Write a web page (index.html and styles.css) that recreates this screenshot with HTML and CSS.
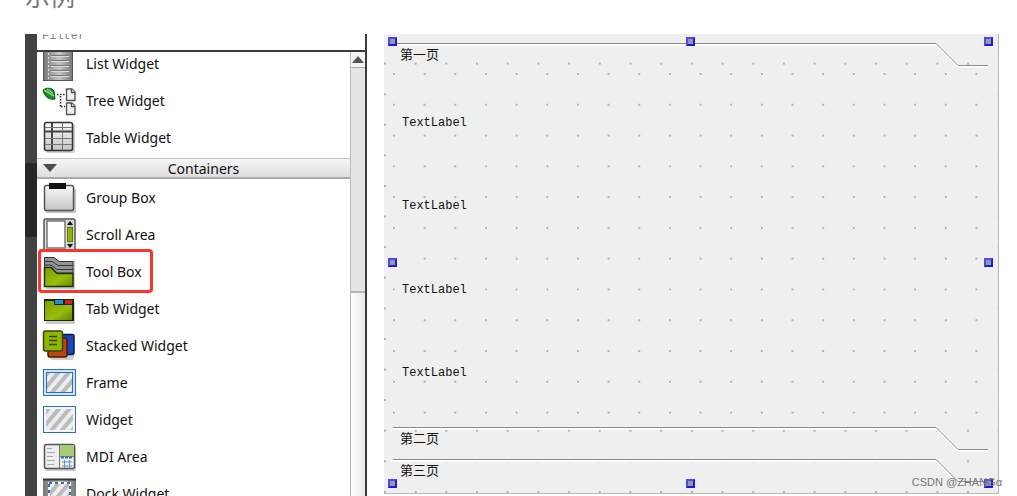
FILE: index.html
```html
<!DOCTYPE html>
<html lang="zh-CN">
<head>
  <meta charset="UTF-8" />
  <title>示例</title>
  <meta name="viewport" content="width=device-width, initial-scale=1.0" />
  <link rel="stylesheet" href="styles.css">
</head>
<body>

  <header class="page-header">
    <h2>示例</h2>
  </header>

  <main class="designer">
    <section class="toolbox">
      <div class="side-strip"><div class="side-active"></div></div>

      <div class="widget-box">
        <input class="filter" type="text" placeholder="Filter" aria-label="Filter" />

        <div class="list-area">
          <div class="widget-list">
            <ul>
              <li>
                <svg class="icon" viewBox="0 0 34 37">
                  <defs>
                    <linearGradient id="gray" x1="0" y1="0" x2="1" y2="0">
                      <stop offset="0" stop-color="#777" /><stop offset="0.55" stop-color="#c4c6c4" /><stop offset="1" stop-color="#777" />
                    </linearGradient>
                    <linearGradient id="silver" x1="0" y1="0" x2="0" y2="1">
                      <stop offset="0" stop-color="#fafafa" /><stop offset="1" stop-color="#c4c4c4" />
                    </linearGradient>
                    <linearGradient id="green" x1="0" y1="0" x2="1" y2="1">
                      <stop offset="0" stop-color="#7c9f00" /><stop offset="0.6" stop-color="#98bd0c" /><stop offset="1" stop-color="#668500" />
                    </linearGradient>
                    <pattern id="stripes" width="8" height="8" patternUnits="userSpaceOnUse" patternTransform="rotate(40)">
                      <rect width="8" height="8" fill="#eee" /><rect width="4" height="8" fill="#bcbcbc" />
                    </pattern>
                  </defs>
                  <rect x="1.5" y="2.5" width="29" height="33" fill="url(#gray)" stroke="#555" />
                  <path d="M6.500 4V34" stroke="#ddd" stroke-dasharray="2 2" />
                  <path d="M9 10.500H27M9 15.500H27M9 20.500H27M9 25.500H27M9 30.500H27" stroke="#777" />
                  <path d="M9 11.500H27M9 16.500H27M9 21.500H27M9 26.500H27M9 31.500H27" stroke="#ddd" />
                </svg>
                <span>List Widget</span>
              </li>
              <li>
                <svg class="icon" viewBox="0 0 34 37">
                  <path d="M1 8C5 5 10 6 12 9L13 17C8 18 3 16 1 8Z" fill="#188b22" stroke="#075010" />
                  <path d="M2 8L12 14M5 7L11 11" stroke="#83dc72" stroke-width="1.500" />
                  <path d="M15 12.500H23M18.500 14V26M19 24.500H23" stroke="#222" stroke-width="1.500" stroke-dasharray="1.500 1.500" fill="none" />
                  <g fill="#eee" stroke="#555" stroke-width="1.400" stroke-linejoin="round">
                    <path d="M24.500 7H30L33 10V18.500H24.500Z" /><path d="M29.500 7V10.500H33" />
                    <path d="M24.500 21H30L33 24V32.500H24.500Z" /><path d="M29.500 21V24.500H33" />
                  </g>
                </svg>
                <span>Tree Widget</span>
              </li>
              <li>
                <svg class="icon" viewBox="0 0 34 37">
                  <rect x="4" y="5" width="29" height="29" rx="2" fill="#aaa" opacity="0.6" />
                  <rect x="2.500" y="3.500" width="28" height="28" rx="2" fill="url(#silver)" stroke="#333" stroke-width="1.500" />
                  <path d="M10 4V31M3 12.500H30" stroke="#444" stroke-width="2" />
                  <path d="M20.500 4V31M3 8.500H30M3 19.500H30M3 25.500H30" stroke="#777" />
                </svg>
                <span>Table Widget</span>
              </li>
            </ul>

            <button class="category" type="button">
              <svg viewBox="0 0 14 8"><path d="M0 0H14L7 8Z" fill="#4c4c4c" /></svg>
              <span>Containers</span>
            </button>

            <ul>
              <li>
                <svg class="icon" viewBox="0 0 34 37">
                  <rect x="3" y="9" width="31" height="25" rx="2" fill="#999" opacity="0.6" />
                  <rect x="2.500" y="6.500" width="29" height="25" rx="2" fill="url(#silver)" stroke="#555" stroke-width="1.500" />
                  <rect x="7" y="4" width="17" height="6" fill="#111" />
                </svg>
                <span>Group Box</span>
              </li>
              <li>
                <svg class="icon" viewBox="0 0 34 37">
                  <rect x="2" y="3" width="31" height="31" rx="2" fill="#ddd" stroke="#555" stroke-width="1.500" />
                  <rect x="5" y="5" width="18" height="27" fill="#fff" stroke="#777" stroke-width="1.500" />
                  <rect x="25" y="5" width="6" height="27" fill="#ccc" />
                  <rect x="25.500" y="11.500" width="5" height="14" fill="#8fb40a" stroke="#5d7b00" />
                  <path d="M25 9L28 5L31 9ZM25 28L28 32L31 28Z" fill="#111" />
                </svg>
                <span>Scroll Area</span>
              </li>
              <li class="marked">
                <svg class="icon" viewBox="0 0 34 37">
                  <path d="M4 8H33V36H4Z" fill="#999" opacity="0.5" />
                  <path d="M2.500 4.500H12L17 8.500H31V20H2.500Z" fill="#929497" stroke="#333" />
                  <path d="M3 8.500H10L16 12.500H31M3 12H9L15 16.500H31" fill="none" stroke="#333" />
                  <path d="M2.500 14.500H9L15 20.500H31V33.500H2.500Z" fill="url(#green)" stroke="#243000" stroke-width="1.500" />
                </svg>
                <span>Tool Box</span>
              </li>
              <li>
                <svg class="icon" viewBox="0 0 34 37">
                  <rect x="4" y="12" width="29" height="22" fill="#999" opacity="0.5" />
                  <rect x="2" y="9" width="30" height="22" fill="#1c2600" />
                  <path d="M3 11H12V15H30V30H3Z" fill="url(#green)" />
                  <rect x="13" y="10" width="8" height="4" fill="#1d8fe0" /><rect x="23" y="10" width="7" height="4" fill="#dd1c24" />
                </svg>
                <span>Tab Widget</span>
              </li>
              <li>
                <svg class="icon" viewBox="0 0 34 37">
                  <rect x="8" y="13" width="24" height="20" rx="3" fill="#888" opacity="0.4" />
                  <rect x="13" y="7.500" width="19" height="20" rx="2" fill="#1848bd" stroke="#05194e" stroke-width="1.500" />
                  <rect x="6" y="11" width="19" height="19" rx="2" fill="#bd4510" stroke="#4b1903" stroke-width="1.500" />
                  <rect x="1.500" y="4" width="19" height="20" rx="2" fill="#8fb507" stroke="#354600" stroke-width="1.500" />
                  <path d="M7 9.500H15M7 13.500H15M7 17.500H15" stroke="#344600" stroke-width="1.500" />
                </svg>
                <span>Stacked Widget</span>
              </li>
              <li>
                <svg class="icon" viewBox="0 0 34 37">
                  <rect x="1.500" y="5.500" width="32" height="26" fill="#d3e3f6" stroke="#2c6fbd" />
                  <rect x="4.500" y="8.500" width="26" height="20" fill="url(#stripes)" stroke="#2c6fbd" />
                </svg>
                <span>Frame</span>
              </li>
              <li>
                <svg class="icon" viewBox="0 0 34 37">
                  <rect x="1.500" y="5.500" width="32" height="26" fill="#f2f6fb" stroke="#2c6fbd" />
                  <rect x="4" y="8" width="27" height="21" fill="url(#stripes)" />
                </svg>
                <span>Widget</span>
              </li>
              <li>
                <svg class="icon" viewBox="0 0 34 37">
                  <rect x="3" y="8" width="31" height="25" rx="2" fill="#999" opacity="0.5" />
                  <rect x="2.500" y="6.500" width="30" height="24" rx="2" fill="#eee" stroke="#555" stroke-width="1.500" />
                  <rect x="18" y="7" width="14" height="11" fill="#a8cc75" />
                  <path d="M17.500 7V30M18 18.500H32" stroke="#777" />
                  <path d="M5 10.500H10M5 14.500H13M5 18.500H11M5 22.500H13M5 26.500H12" stroke="#aaa" />
                  <path d="M19 19.500H31" stroke="#2d6fbc" stroke-width="2" stroke-dasharray="3 1" />
                  <path d="M20 24H30M20 28H30M22.500 22V30M27.500 22V30" stroke="#6994c7" />
                </svg>
                <span>MDI Area</span>
              </li>
              <li>
                <svg class="icon" viewBox="0 0 34 37">
                  <rect x="1" y="4" width="33" height="30" fill="url(#gray)" />
                  <path d="M1 4.500H34" stroke="#333" stroke-width="2" />
                  <rect x="7" y="8" width="21" height="26" fill="url(#stripes)" stroke="#fff" stroke-width="2" />
                  <rect x="7" y="8" width="21" height="26" fill="none" stroke="#2c6fbd" stroke-width="2" stroke-dasharray="3 3" />
                </svg>
                <span>Dock Widget</span>
              </li>
            </ul>
          </div>

          <div class="scrollbar">
            <button class="scroll-up" type="button" aria-label="Scroll up">
              <svg viewBox="0 0 12 7"><path d="M0 7L6 0L12 7Z" fill="#555" /></svg>
            </button>
            <div class="scroll-thumb"></div>
          </div>
        </div>
      </div>
    </section>

    <section class="form-canvas">
      <div class="tab">
        <span>第一页</span>
        <div class="tab-line"></div>
        <svg class="tab-edge" viewBox="0 0 52 25">
          <path d="M0 1.500L22 23.500H52" fill="none" stroke="#fff" stroke-width="2" />
          <path d="M0 0.500L22 22.500H52" fill="none" stroke="#8c8c8c" />
        </svg>
      </div>
      <div class="tab-page">
        <div><span>TextLabel</span></div>
        <div><span>TextLabel</span></div>
        <div><span>TextLabel</span></div>
        <div><span>TextLabel</span></div>
      </div>
      <div class="tab">
        <span>第二页</span>
        <div class="tab-line"></div>
        <svg class="tab-edge" viewBox="0 0 52 25">
          <path d="M0 1.500L22 23.500H52" fill="none" stroke="#fff" stroke-width="2" />
          <path d="M0 0.500L22 22.500H52" fill="none" stroke="#8c8c8c" />
        </svg>
      </div>
      <div class="tab">
        <span>第三页</span>
        <div class="tab-line"></div>
        <svg class="tab-edge" viewBox="0 0 52 25">
          <path d="M0 1.500L22 23.500H52" fill="none" stroke="#fff" stroke-width="2" />
          <path d="M0 0.500L22 22.500H52" fill="none" stroke="#8c8c8c" />
        </svg>
      </div>

      <!-- selection handles -->
      <div class="handles">
        <i></i><i></i><i></i>
        <i></i><i class="empty"></i><i></i>
        <i></i><i></i><i></i>
      </div>
      <div class="watermark">CSDN @ZHANGα</div>
    </section>
  </main>

</body>
</html>
```

FILE: styles.css
```css
* {
  box-sizing: border-box;
}

body {
  margin: 0;
  height: 100vh;
  display: flex;
  flex-direction: column;
  overflow: hidden;
  background: #fff;
  color: #111;
  font-family: "Noto Sans", "Noto Sans CJK SC", sans-serif;
  font-size: 14px;
}

.page-header {
  flex: none;
  height: 34px;
  padding-left: 25px;
  overflow: hidden;
}

h2 {
  margin: -22px 0 0;
  font-family: "Noto Sans CJK SC", sans-serif;
  font-size: 25px;
  font-weight: normal;
  line-height: 34px;
  color: #777;
}

.designer {
  flex: 1;
  min-height: 0;
  display: grid;
  grid-template-columns: 342fr 615fr;
  grid-template-rows: 100%;
  gap: 17px;
  padding: 0 18px 0 25px;
}

/* Widget box on the left */
.toolbox {
  display: flex;
  overflow: hidden;
  border-right: 2px solid #3c3c3e;
}

.side-strip {
  flex: none;
  width: 12px;
  padding-top: 129px;
  background: #414244;
}

.side-active {
  height: 74px;
  background: #262729;
}

.widget-box {
  flex: 1;
  display: flex;
  flex-direction: column;
  min-width: 0;
}

.filter {
  flex: none;
  width: 100%;
  height: 18px;
  padding: 0 5px 12px;
  border: none;
  border-bottom: 2px solid #3c3c3e;
  outline: none;
  font-family: "Liberation Mono", monospace;
  font-size: 12px;
  line-height: 1;
}

.filter::placeholder {
  color: #888;
}

.list-area {
  flex: 1;
  min-height: 0;
  display: flex;
}

.widget-list {
  flex: 1;
  overflow: hidden;
}

.widget-list ul {
  margin: 0;
  padding: 0;
  list-style: none;
}

.widget-list ul:first-child {
  margin-top: -7px;
}

.widget-list li {
  position: relative;
  display: flex;
  align-items: center;
  gap: 10px;
  height: 37px;
  padding-left: 5px;
}

.icon {
  flex: none;
  width: 34px;
  height: 37px;
}

.marked::after {
  content: "";
  box-sizing: border-box;
  position: absolute;
  top: -4px;
  bottom: -3px;
  left: 1px;
  width: 115px;
  border: 3px solid #fb3528;
  border-radius: 4px;
}

.category {
  display: flex;
  align-items: center;
  width: 100%;
  height: 21px;
  margin-top: 2px;
  padding: 0 0 0 6px;
  border: none;
  border-top: 1px solid #c4c4c4;
  border-bottom: 2px solid #aaa;
  background: linear-gradient(#f6f6f6, #dedede);
  color: #111;
  font: inherit;
}

.category svg {
  width: 14px;
  height: 8px;
}

.category span {
  flex: 1;
}

.scrollbar {
  flex: none;
  width: 15px;
  border-left: 1px solid #bbb;
  background: linear-gradient(to right, #fff, #e8e8e8);
}

.scroll-up {
  display: flex;
  align-items: center;
  justify-content: center;
  width: 100%;
  height: 16px;
  padding: 0;
  border: none;
  border-bottom: 1px solid #aaa;
  background: #f4f4f4;
}

.scroll-up svg {
  width: 12px;
  height: 7px;
}

.scroll-thumb {
  height: 225px;
  border-bottom: 2px solid #b4b4b4;
  background: #e5e5e5;
}

/* Form with dotted grid */
.form-canvas {
  position: relative;
  display: flex;
  flex-direction: column;
  margin-bottom: 2px;
  padding: 9px 10px 2px 9px;
  border-right: 1px solid #b8b8b8;
  border-bottom: 1px solid #b8b8b8;
  background-color: #efefef;
  background-image: radial-gradient(circle at 1px 1px, #b0b0b0 1px, transparent 1px);
  background-size: 5% calc(100% / 15);
  background-position: 0 -2px;
}

.tab {
  flex: none;
  display: flex;
  position: relative;
  height: 32px;
}

.tab span {
  position: absolute;
  left: 7px;
  top: 1px;
  font-family: "Noto Sans CJK SC", sans-serif;
  font-size: 13px;
  line-height: 20px;
}

.tab-line {
  flex: 1;
  height: 3px;
  border-top: 1px solid #8c8c8c;
  background: #fff;
}

.tab-edge {
  width: 52px;
  height: 25px;
}

.tab-page {
  flex: 1;
  display: grid;
  grid-template-rows: repeat(4, 1fr);
  align-items: center;
  margin-top: -2px;
  padding: 8px 9px 12px;
  background-color: #efefef;
  background-image: radial-gradient(circle at 1px 1px, #b0b0b0 1px, transparent 1px);
  background-size: calc(100% / 19.4) calc(100% / 11.5);
  font-family: "Liberation Mono", monospace;
  font-size: 12px;
  line-height: 14px;
}

.tab-page span {
  background: #efefef;
}

.handles {
  position: absolute;
  top: 3px;
  right: 5px;
  bottom: 5px;
  left: 4px;
  display: grid;
  grid-template-columns: repeat(3, 9px);
  grid-template-rows: repeat(3, 9px);
  justify-content: space-between;
  align-content: space-between;
}

.handles i {
  border: 2px solid #1a1ae6;
  border-top-color: #4a4af0;
  border-left-color: #4a4af0;
  background: #999;
}

.handles .empty {
  visibility: hidden;
}

.watermark {
  position: absolute;
  right: -4px;
  bottom: 4px;
  font-family: "Liberation Sans", sans-serif;
  font-size: 11px;
  line-height: 14px;
  color: #777;
}
```
